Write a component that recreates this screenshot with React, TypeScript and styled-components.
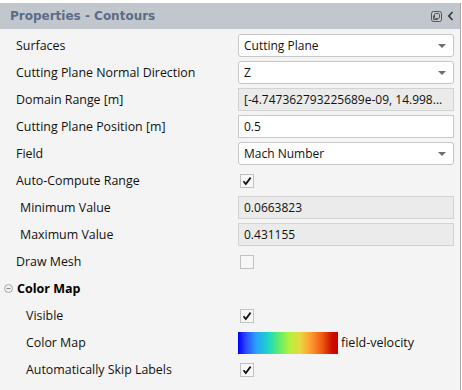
import React from "react";
import styled, { createGlobalStyle } from "styled-components";

const GlobalStyle = createGlobalStyle`
  html, body {
    margin: 0;
    padding: 0;
    background: #ffffff;
  }
  body {
    width: 462px;
    height: 390px;
    overflow: hidden;
    font-family: "Open Sans", "Noto Sans", sans-serif;
  }
`;

const Panel = styled.div`
  margin-top: 3px;
  width: 460px;
  height: 387px;
  background: #f4f4f4;
  border-right: 1px solid #a8a8a8;
  display: flex;
  flex-direction: column;
`;

const Header = styled.div`
  height: 26px;
  background: #c2c7ce;
  display: flex;
  align-items: center;
  padding: 0 6px 0 10px;
`;

const Title = styled.div`
  flex: 1;
  font-family: "DejaVu Sans", Verdana, sans-serif;
  font-weight: bold;
  font-size: 12px;
  color: #5a6c88;
`;

const HeaderIcons = styled.div`
  display: flex;
  align-items: center;
  gap: 5px;
`;

const Rows = styled.div`
  padding-top: 3px;
  display: flex;
  flex-direction: column;
`;

const Row = styled.div`
  height: 27px;
  display: grid;
  grid-template-columns: 238px 216px;
  align-items: center;
`;

const Label = styled.div<{ $indent: number }>`
  padding-left: ${(p) => p.$indent}px;
  font-size: 12.4px;
  color: #111;
  white-space: nowrap;
`;

const GroupRow = styled.div`
  height: 27px;
  display: flex;
  align-items: center;
  padding-left: 4px;
  gap: 4px;
`;

const GroupTitle = styled.div`
  font-size: 12.5px;
  font-weight: bold;
  color: #000;
`;

const Select = styled.div`
  height: 21px;
  background: #ffffff;
  border: 1px solid #c6c6c6;
  border-radius: 3px;
  display: flex;
  align-items: center;
  justify-content: space-between;
  padding: 0 7px 0 5px;
  font-size: 12px;
  color: #111;
`;

const Arrow = styled.div`
  width: 0;
  height: 0;
  border-left: 4px solid transparent;
  border-right: 4px solid transparent;
  border-top: 4px solid #6e6e6e;
`;

const TextBox = styled.div<{ $readOnly?: boolean }>`
  height: 21px;
  background: ${(p) => (p.$readOnly ? "#ebebeb" : "#ffffff")};
  border: 1px solid ${(p) => (p.$readOnly ? "#d3d3d3" : "#c8c8c8")};
  display: flex;
  align-items: center;
  padding: 0 5px;
  font-size: 12px;
  color: #111;
  white-space: nowrap;
  overflow: hidden;
`;

const CheckBox = styled.div`
  margin-left: 2px;
  width: 12px;
  height: 12px;
  border: 1px solid #c2c2c2;
  background: #f7f7f7;
  display: flex;
  align-items: center;
  justify-content: center;
`;

const ColorMapCell = styled.div`
  display: flex;
  align-items: center;
  gap: 3px;
`;

const ColorBar = styled.div`
  width: 100px;
  height: 22px;
  background: linear-gradient(
    90deg,
    #0000ff 0%,
    #2a4cff 8%,
    #2aa0ff 18%,
    #1ad6c8 30%,
    #66ee66 42%,
    #b8f03c 52%,
    #e8d840 62%,
    #ffa030 72%,
    #f05a14 84%,
    #cc1000 94%,
    #c80000 100%
  );
`;

const ColorName = styled.div`
  font-size: 12.5px;
  color: #111;
`;

const Check = () => (
  <svg width="10" height="10" viewBox="0 0 10 10">
    <path d="M1.5 5.2 L3.8 8 L8.6 1.6" fill="none" stroke="#111" strokeWidth="1.8" />
  </svg>
);

const RestoreIcon = () => (
  <svg width="11" height="11" viewBox="0 0 11 11">
    <rect x="0.5" y="0.5" width="10" height="10" rx="2" fill="none" stroke="#555" />
    <rect x="3.5" y="2.5" width="5" height="5" rx="1" fill="none" stroke="#555" />
    <path d="M2.5 4.5 V8.5 H6.5" fill="none" stroke="#555" />
  </svg>
);

const ChevronLeft = () => (
  <svg width="7" height="10" viewBox="0 0 7 10">
    <path d="M5.5 1 L1.8 5 L5.5 9" fill="none" stroke="#333" strokeWidth="1.6" />
  </svg>
);

const CollapseIcon = () => (
  <svg width="9" height="9" viewBox="0 0 9 9">
    <circle cx="4.5" cy="4.5" r="4" fill="#f0f0f0" stroke="#a8a8a8" />
    <path d="M2.5 4.5 H6.5" stroke="#888" />
  </svg>
);

type Field =
  | { kind: "select"; value: string }
  | { kind: "text"; value: string; readOnly?: boolean }
  | { kind: "check"; checked: boolean }
  | { kind: "colormap"; value: string };

type Prop = { label: string; indent: number; field: Field };

const mainProps: Prop[] = [
  { label: "Surfaces", indent: 16, field: { kind: "select", value: "Cutting Plane" } },
  { label: "Cutting Plane Normal Direction", indent: 16, field: { kind: "select", value: "Z" } },
  {
    label: "Domain Range [m]",
    indent: 16,
    field: { kind: "text", value: "[-4.747362793225689e-09, 14.998...", readOnly: true },
  },
  { label: "Cutting Plane Position [m]", indent: 16, field: { kind: "text", value: "0.5" } },
  { label: "Field", indent: 16, field: { kind: "select", value: "Mach Number" } },
  { label: "Auto-Compute Range", indent: 16, field: { kind: "check", checked: true } },
  { label: "Minimum Value", indent: 20, field: { kind: "text", value: "0.0663823", readOnly: true } },
  { label: "Maximum Value", indent: 20, field: { kind: "text", value: "0.431155", readOnly: true } },
  { label: "Draw Mesh", indent: 16, field: { kind: "check", checked: false } },
];

const colorMapProps: Prop[] = [
  { label: "Visible", indent: 26, field: { kind: "check", checked: true } },
  { label: "Color Map", indent: 26, field: { kind: "colormap", value: "field-velocity" } },
  { label: "Automatically Skip Labels", indent: 26, field: { kind: "check", checked: true } },
];

const FieldView = ({ field }: { field: Field }) => {
  switch (field.kind) {
    case "select":
      return (
        <Select>
          <span>{field.value}</span>
          <Arrow />
        </Select>
      );
    case "text":
      return <TextBox $readOnly={field.readOnly}>{field.value}</TextBox>;
    case "check":
      return <CheckBox>{field.checked && <Check />}</CheckBox>;
    case "colormap":
      return (
        <ColorMapCell>
          <ColorBar />
          <ColorName>{field.value}</ColorName>
        </ColorMapCell>
      );
  }
};

const PropRow = ({ prop }: { prop: Prop }) => (
  <Row>
    <Label $indent={prop.indent}>{prop.label}</Label>
    <div>
      <FieldView field={prop.field} />
    </div>
  </Row>
);

const App: React.FC = () => {
  return (
    <>
      <GlobalStyle />
      <Panel>
        <Header>
          <Title>Properties - Contours</Title>
          <HeaderIcons>
            <RestoreIcon />
            <ChevronLeft />
          </HeaderIcons>
        </Header>
        <Rows>
          {mainProps.map((p) => (
            <PropRow key={p.label} prop={p} />
          ))}
          <GroupRow>
            <CollapseIcon />
            <GroupTitle>Color Map</GroupTitle>
          </GroupRow>
          {colorMapProps.map((p) => (
            <PropRow key={p.label} prop={p} />
          ))}
        </Rows>
      </Panel>
    </>
  );
};

export default App;
